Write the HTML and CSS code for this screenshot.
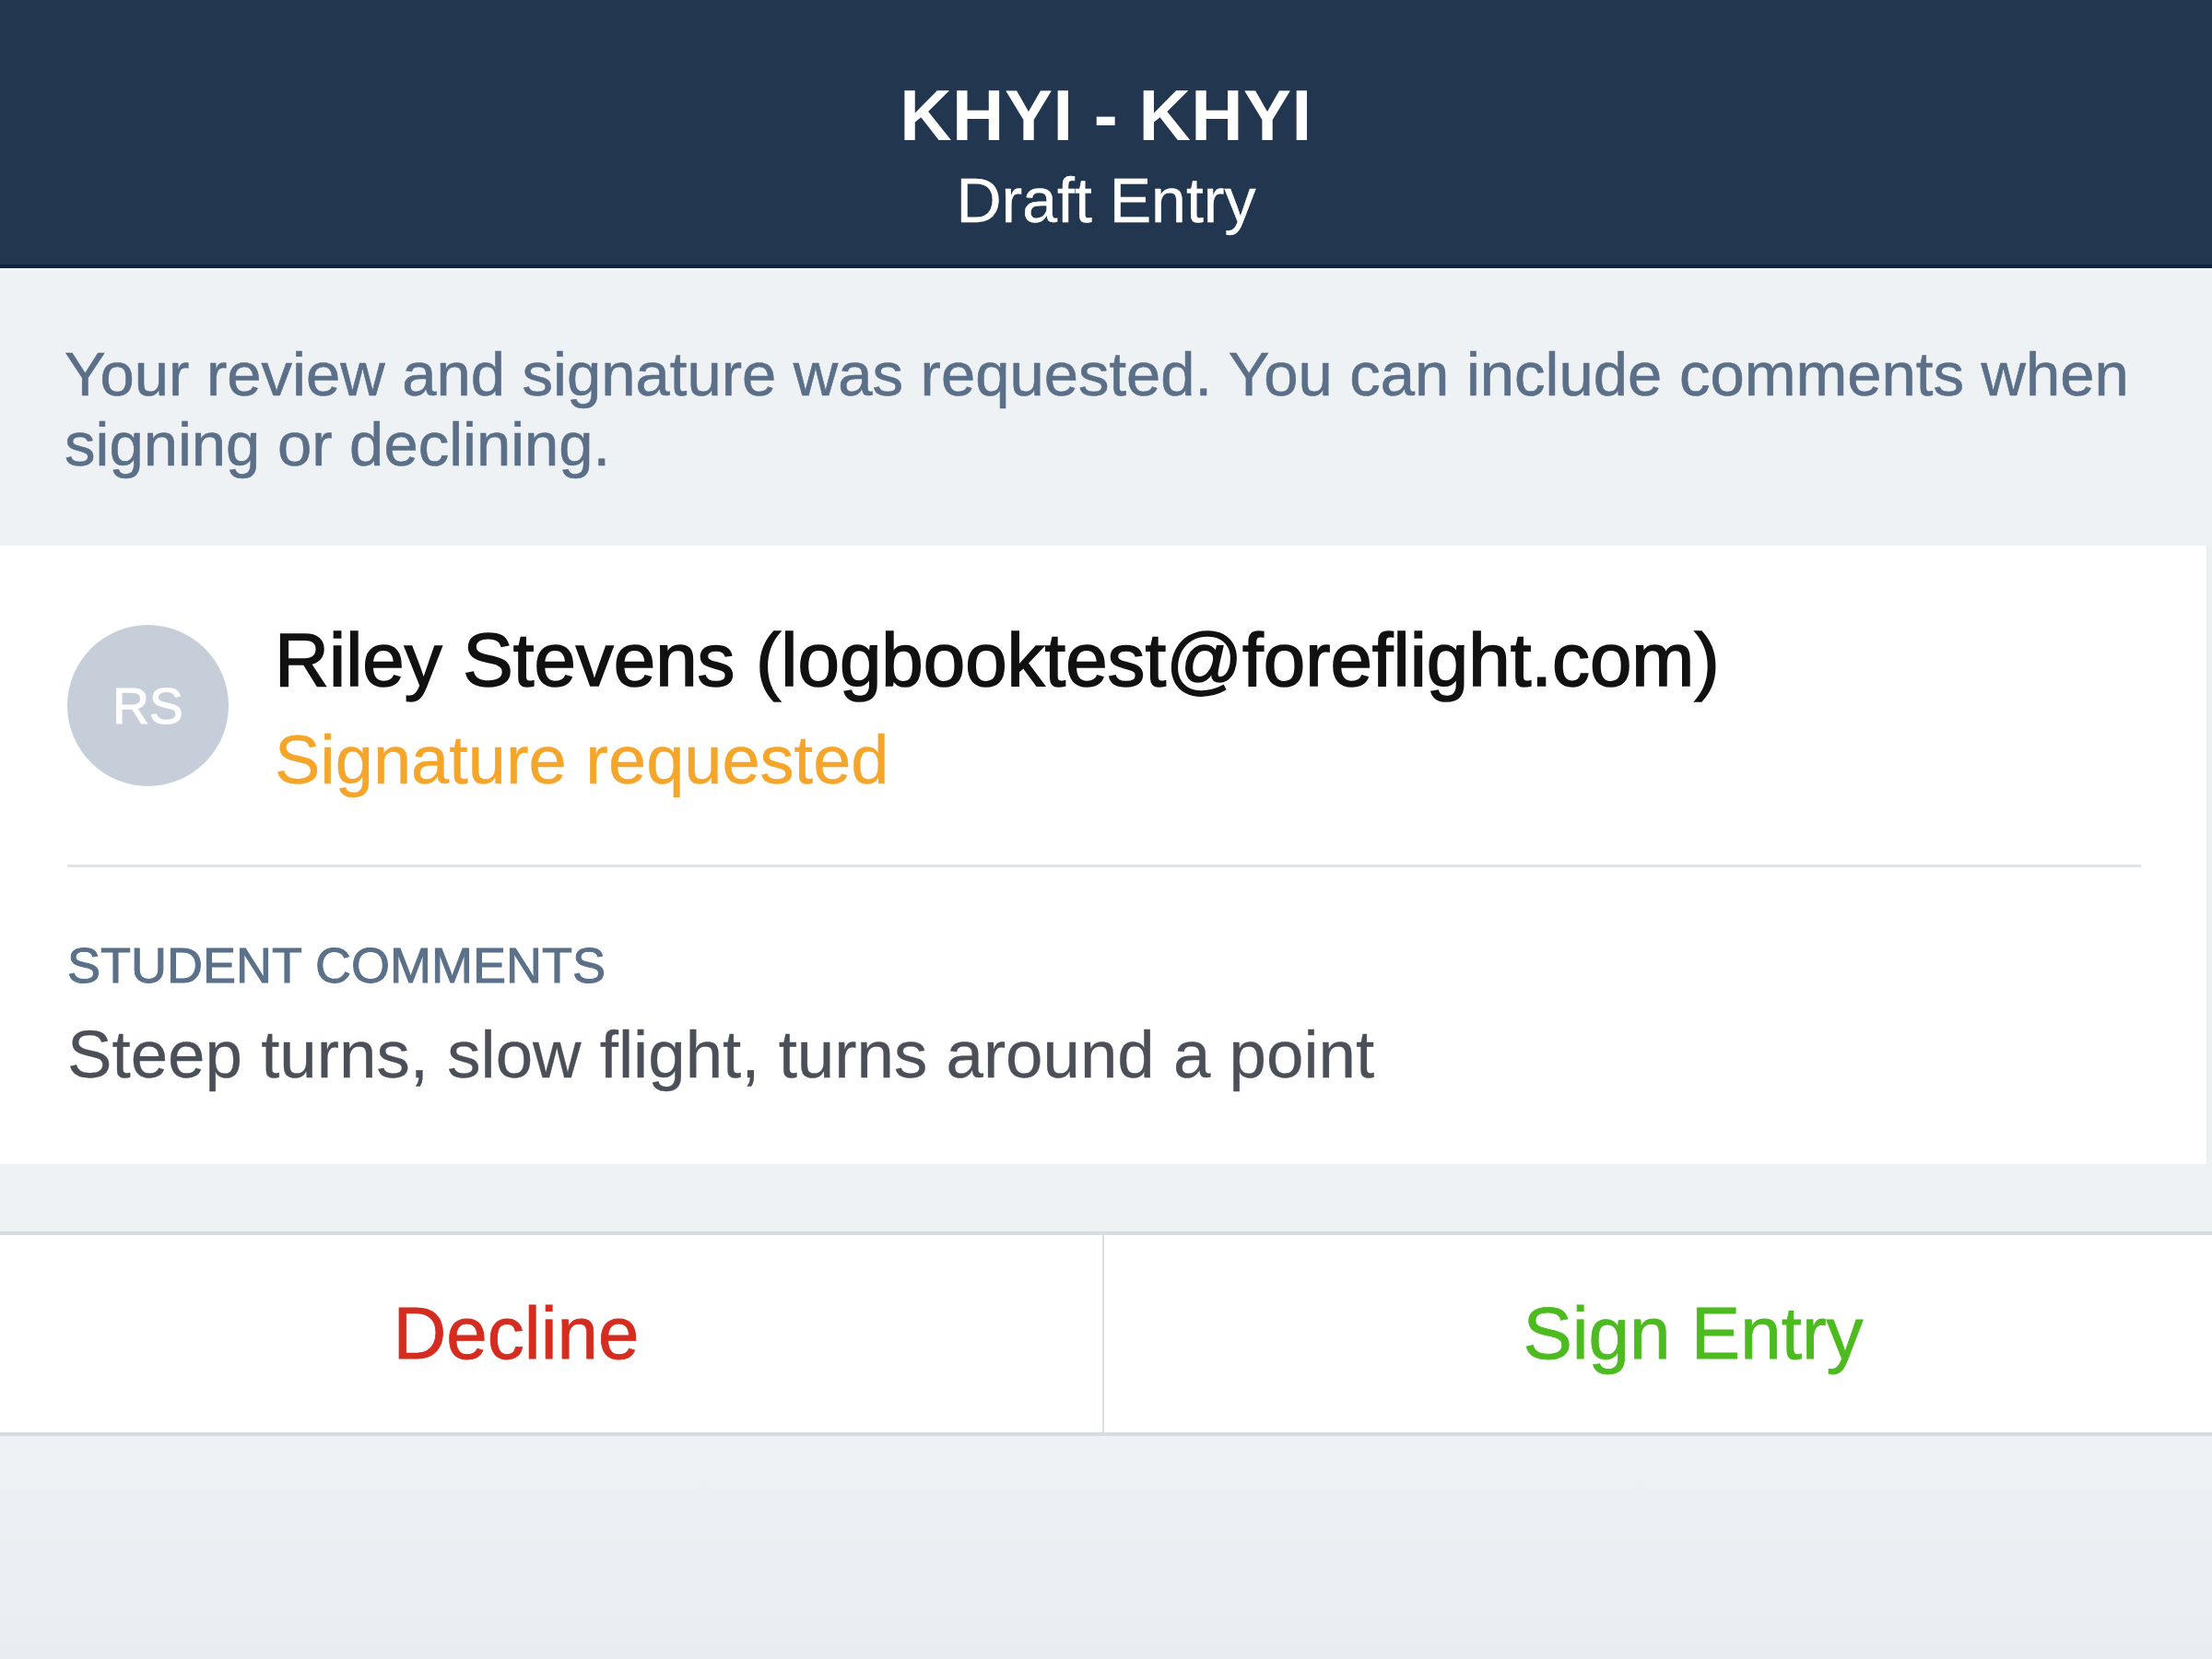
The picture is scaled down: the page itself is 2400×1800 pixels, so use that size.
FILE: index.html
```html
<!DOCTYPE html>
<html lang="en">
<head>
<meta charset="utf-8">
<title>KHYI - KHYI Draft Entry</title>
<link rel="stylesheet" href="styles.css">
</head>
<body>
<div class="screen">
  <header class="navbar">
    <div class="nav-title">KHYI - KHYI</div>
    <div class="nav-subtitle">Draft Entry</div>
  </header>

  <section class="notice">
    <p class="notice-text">Your review and signature was requested. You can include comments when signing or declining.</p>
  </section>

  <section class="card">
    <div class="signer">
      <div class="avatar">RS</div>
      <div class="signer-info">
        <div class="signer-name">Riley Stevens (logbooktest@foreflight.com)</div>
        <div class="signer-status">Signature requested</div>
      </div>
    </div>
    <div class="divider"></div>
    <div class="comments">
      <div class="comments-label">STUDENT COMMENTS</div>
      <div class="comments-text">Steep turns, slow flight, turns around a point</div>
    </div>
  </section>

  <div class="actions">
    <button class="action decline">Decline</button>
    <button class="action sign">Sign Entry</button>
  </div>

  <div class="footer-space"></div>
</div>
</body>
</html>
```

FILE: styles.css
```css
html, body {
  margin: 0;
  padding: 0;
}

body {
  width: 2400px;
  height: 1800px;
  overflow: hidden;
  font-family: "Liberation Sans", Arial, sans-serif;
  background: #eef1f4;
}

.screen {
  display: flex;
  flex-direction: column;
  height: 1800px;
}

.navbar {
  box-sizing: border-box;
  height: 291px;
  padding-top: 79px;
  background: #223650;
  border-bottom: 4px solid #11233a;
  display: flex;
  flex-direction: column;
  align-items: center;
  color: #ffffff;
}

.nav-title {
  font-size: 78px;
  font-weight: bold;
  line-height: 92px;
  letter-spacing: 0.5px;
}

.nav-subtitle {
  margin-top: 5px;
  font-size: 68px;
  line-height: 82px;
  -webkit-text-stroke: 0.4px #ffffff;
}

.notice {
  background: #eff2f5;
  padding: 77px 30px 72px 70px;
}

.notice-text {
  margin: 0;
  font-size: 67px;
  line-height: 76px;
  color: #5b6f88;
  -webkit-text-stroke: 0.6px #5b6f88;
}

.card {
  background: #ffffff;
  margin-right: 6px;
  padding: 74px 0 74px 0;
}

.signer {
  display: flex;
  align-items: flex-start;
  padding-left: 73px;
}

.avatar {
  width: 175px;
  height: 175px;
  margin-top: 12px;
  border-radius: 50%;
  background: #c6cfd9;
  color: #ffffff;
  display: flex;
  align-items: center;
  justify-content: center;
  font-size: 55px;
  -webkit-text-stroke: 1.2px #ffffff;
  flex: none;
}

.signer-info {
  margin-left: 50px;
}

.signer-name {
  font-size: 81.7px;
  line-height: 100px;
  color: #111111;
  -webkit-text-stroke: 1.6px #111111;
}

.signer-status {
  margin-top: 4px;
  font-size: 74px;
  line-height: 110px;
  color: #f5a62a;
  -webkit-text-stroke: 0.4px #f5a62a;
}

.divider {
  height: 3px;
  background: #dfe4e9;
  margin: 58px 71px 0 73px;
}

.comments {
  padding: 71px 0 0 73px;
}

.comments-label {
  font-size: 54px;
  line-height: 70px;
  color: #5b7089;
  -webkit-text-stroke: 1px #5b7089;
}

.comments-text {
  margin-top: 17px;
  font-size: 72.7px;
  line-height: 90px;
  color: #4b5058;
  -webkit-text-stroke: 0.3px #4b5058;
}

.actions {
  margin-top: 73px;
  display: grid;
  grid-template-columns: 1198px 1fr;
  background: #ffffff;
  border-top: 4px solid #d6dce2;
  border-bottom: 4px solid #d6dce2;
  height: 214px;
}

.action {
  border: none;
  background: #ffffff;
  font-family: "Liberation Sans", Arial, sans-serif;
  font-size: 80px;
  padding: 0;
  margin: 0;
  cursor: pointer;
}

.decline {
  color: #d42c1f;
  -webkit-text-stroke: 0.8px #d42c1f;
  padding-right: 76px;
  border-right: 2px solid #d9dfe5;
}

.sign {
  color: #4cbb1f;
  -webkit-text-stroke: 0.8px #4cbb1f;
  padding-left: 76px;
}

.footer-space {
  flex: 1;
  background: linear-gradient(#eef1f4, #e9edf1);
}
```
